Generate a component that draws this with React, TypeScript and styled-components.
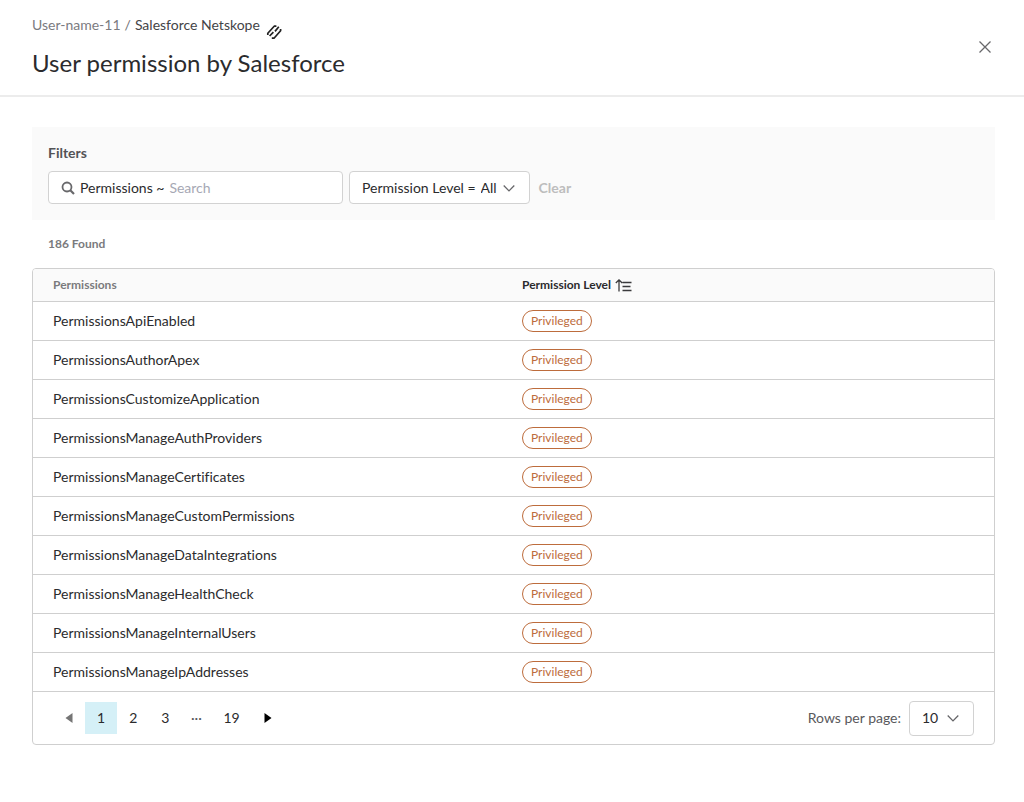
import React from "react";
import styled, { createGlobalStyle } from "styled-components";

const GlobalStyle = createGlobalStyle`
  *, *::before, *::after { box-sizing: border-box; }
  body {
    margin: 0;
    background: #fff;
    color: #2b2b2d;
    font: 400 14px/20px Lato, "Liberation Sans", sans-serif;
    font-variant-ligatures: none;
  }
  button, input, select { font: inherit; color: inherit; }
  button { cursor: pointer; }
`;

const Header = styled.header`
  display: flex;
  align-items: center;
  justify-content: space-between;
  padding: 15px 24px 16px 32px;
  border-bottom: 2px solid #ececec;
`;

const Breadcrumb = styled.nav`
  display: flex;
  gap: 4px;
  height: 32px;
  color: #6f6f73;
  svg {
    margin: 9px 0 0 2px;
  }
`;

const Crumb = styled.a<{ $current?: boolean }>`
  color: ${(p) => (p.$current ? "#444447" : "#7b7b7f")};
  text-decoration: none;
`;

const Title = styled.h1`
  margin: 0;
  font-size: 24px;
  font-weight: 400;
  line-height: 32px;
`;

const CloseButton = styled.button`
  display: flex;
  padding: 8px;
  border: 0;
  background: none;
`;

const Main = styled.main`
  padding: 30px 29px 56px 32px;
`;

const Filters = styled.section`
  padding: 16px;
  background: #fafafa;
`;

const FiltersTitle = styled.h2`
  margin: 0 0 8px;
  font-size: 14px;
  line-height: 20px;
  font-weight: 700;
  color: #535356;
`;

const FilterRow = styled.div`
  display: flex;
  align-items: center;
  gap: 6px;
`;

const SearchBox = styled.label`
  display: flex;
  align-items: center;
  gap: 5px;
  width: 295px;
  height: 33px;
  padding: 0 12px;
  border: 1px solid #d2d2d2;
  border-radius: 4px;
  background: #fff;
`;

const SearchInput = styled.input`
  flex: 1;
  min-width: 0;
  padding: 0;
  border: 0;
  outline: 0;
  background: none;
  &::placeholder {
    color: #a6a8b4;
    opacity: 1;
  }
`;

const SelectBox = styled.label<{ $tall?: boolean }>`
  display: flex;
  align-items: center;
  gap: ${(p) => (p.$tall ? 8 : 5)}px;
  height: ${(p) => (p.$tall ? 35 : 33)}px;
  padding: 0 14px 0 12px;
  border: 1px solid #d2d2d2;
  border-radius: 4px;
  background: #fff;
`;

const Select = styled.select`
  appearance: none;
  padding: 0;
  border: 0;
  outline: 0;
  background: none;
`;

const ClearButton = styled.button`
  padding: 0 3px;
  border: 0;
  background: none;
  font-weight: 700;
  color: #bdbdbd;
`;

const Found = styled.p`
  margin: 14px 16px;
  font-size: 12px;
  font-weight: 700;
  color: #7a7a7d;
`;

const Panel = styled.section`
  overflow: hidden;
  border: 1px solid #cfcfcf;
  border-radius: 4px;
`;

const Table = styled.table`
  width: 100%;
  table-layout: fixed;
  border-collapse: separate;
  border-spacing: 0;
`;

const HeadCell = styled.th<{ $sorted?: boolean }>`
  height: 33px;
  padding: 0 20px;
  width: ${(p) => (p.$sorted ? "auto" : "469px")};
  border-bottom: 1px solid #cfcfcf;
  background: #fafafa;
  text-align: left;
  font-size: 12px;
  font-weight: 700;
  color: ${(p) => (p.$sorted ? "#2b2b2d" : "#7a7a7d")};
`;

const SortButton = styled.button`
  display: flex;
  align-items: center;
  gap: 4px;
  padding: 0;
  border: 0;
  background: none;
`;

const Cell = styled.td`
  height: 39px;
  padding: 0 20px;
  border-bottom: 1px solid #cfcfcf;
`;

const Badge = styled.span`
  display: block;
  width: fit-content;
  padding: 0 8px;
  border: 1px solid #bd6c3c;
  border-radius: 11px;
  font-size: 12px;
  line-height: 20px;
  color: #bd6c3c;
`;

const Footer = styled.footer`
  display: flex;
  align-items: center;
  justify-content: space-between;
  height: 52px;
  padding: 0 20px;
`;

const Pages = styled.nav`
  display: flex;
  align-items: center;
`;

const PageButton = styled.button<{ $active?: boolean }>`
  display: flex;
  align-items: center;
  justify-content: center;
  min-width: 32px;
  height: 32px;
  padding: 0 12px;
  border: 0;
  background: ${(p) => (p.$active ? "#d5f0f7" : "none")};
`;

const Ellipsis = styled.span`
  width: 30px;
  text-align: center;
  color: #59595c;
`;

const RowsPerPage = styled.div`
  display: flex;
  align-items: center;
  gap: 8px;
  color: #59595c;
  select {
    color: #2b2b2d;
  }
`;

const LinkIcon = () => (
  <svg width="16" height="16" viewBox="0 0 16 16" fill="none" stroke="#222" strokeWidth="1.7" strokeLinejoin="round" aria-hidden="true">
    <path d="M1.8 11V9.2L8.2 2.2H10.4M3.6 12L7.4 8.2M9 7.4L12.8 2.8M14.6 5V6.8L8 14.2H5.8" />
  </svg>
);

const Chevron = () => (
  <svg width="12" height="8" viewBox="0 0 12 8" fill="none" stroke="#68686b" strokeWidth="1.3" aria-hidden="true">
    <path d="M.7 1.5L6 6.9L11.3 1.5" />
  </svg>
);

const Arrow = ({ back }: { back?: boolean }) => (
  <svg width="8" height="10" viewBox="0 0 8 10" fill={back ? "#757575" : "#000"} aria-hidden="true">
    <path d={back ? "M7.5 0V10L.5 5Z" : "M.5 0V10L7.5 5Z"} />
  </svg>
);

const permissions = [
  "PermissionsApiEnabled",
  "PermissionsAuthorApex",
  "PermissionsCustomizeApplication",
  "PermissionsManageAuthProviders",
  "PermissionsManageCertificates",
  "PermissionsManageCustomPermissions",
  "PermissionsManageDataIntegrations",
  "PermissionsManageHealthCheck",
  "PermissionsManageInternalUsers",
  "PermissionsManageIpAddresses",
];

export default function App() {
  return (
    <>
      <GlobalStyle />
      <Header>
        <div>
          <Breadcrumb aria-label="Breadcrumb">
            <Crumb href="#user">User-name-11</Crumb>
            <span>/</span>
            <Crumb href="#salesforce" $current>Salesforce Netskope</Crumb>
            <LinkIcon />
          </Breadcrumb>
          <Title>User permission by Salesforce</Title>
        </div>
        <CloseButton aria-label="Close">
          <svg width="14" height="14" viewBox="0 0 14 14" stroke="#68686b" strokeWidth="1.3" aria-hidden="true">
            <path d="M1.5 1.5L12.5 12.5M12.5 1.5L1.5 12.5" />
          </svg>
        </CloseButton>
      </Header>
      <Main>
        <Filters>
          <FiltersTitle>Filters</FiltersTitle>
          <FilterRow>
            <SearchBox>
              <svg width="14" height="14" viewBox="0 0 14 14" fill="none" stroke="#68686b" strokeWidth="1.8" aria-hidden="true">
                <circle cx="6" cy="6" r="4.5" />
                <path d="M9.3 9.3L13 13" strokeWidth="2.2" />
              </svg>
              <span>Permissions ~</span>
              <SearchInput type="text" placeholder="Search" />
            </SearchBox>
            <SelectBox>
              <span>Permission Level =</span>
              <Select defaultValue="All">
                <option>All</option>
              </Select>
              <Chevron />
            </SelectBox>
            <ClearButton>Clear</ClearButton>
          </FilterRow>
        </Filters>
        <Found>186 Found</Found>
        <Panel>
          <Table>
            <thead>
              <tr>
                <HeadCell scope="col">Permissions</HeadCell>
                <HeadCell scope="col" $sorted aria-sort="ascending">
                  <SortButton>
                    Permission Level
                    <svg width="17" height="14" viewBox="0 0 17 14" fill="none" stroke="#3a3a3c" strokeWidth="1.3" aria-hidden="true">
                      <path d="M4 13.5V2M.8 5L4 1.8L7.2 5M7.5 4.5H16.5M7.5 8.5H15.5M7.5 12.5H16.5" />
                    </svg>
                  </SortButton>
                </HeadCell>
              </tr>
            </thead>
            <tbody>
              {permissions.map((name) => (
                <tr key={name}>
                  <Cell>{name}</Cell>
                  <Cell><Badge>Privileged</Badge></Cell>
                </tr>
              ))}
            </tbody>
          </Table>
          <Footer>
            <Pages aria-label="Pagination">
              <PageButton aria-label="Previous page"><Arrow back /></PageButton>
              <PageButton $active aria-current="page">1</PageButton>
              <PageButton>2</PageButton>
              <PageButton>3</PageButton>
              <Ellipsis>···</Ellipsis>
              <PageButton>19</PageButton>
              <PageButton aria-label="Next page"><Arrow /></PageButton>
            </Pages>
            <RowsPerPage>
              <label htmlFor="rows">Rows per page:</label>
              <SelectBox as="div" $tall>
                <Select id="rows" defaultValue="10">
                  <option>10</option>
                </Select>
                <Chevron />
              </SelectBox>
            </RowsPerPage>
          </Footer>
        </Panel>
      </Main>
    </>
  );
}
